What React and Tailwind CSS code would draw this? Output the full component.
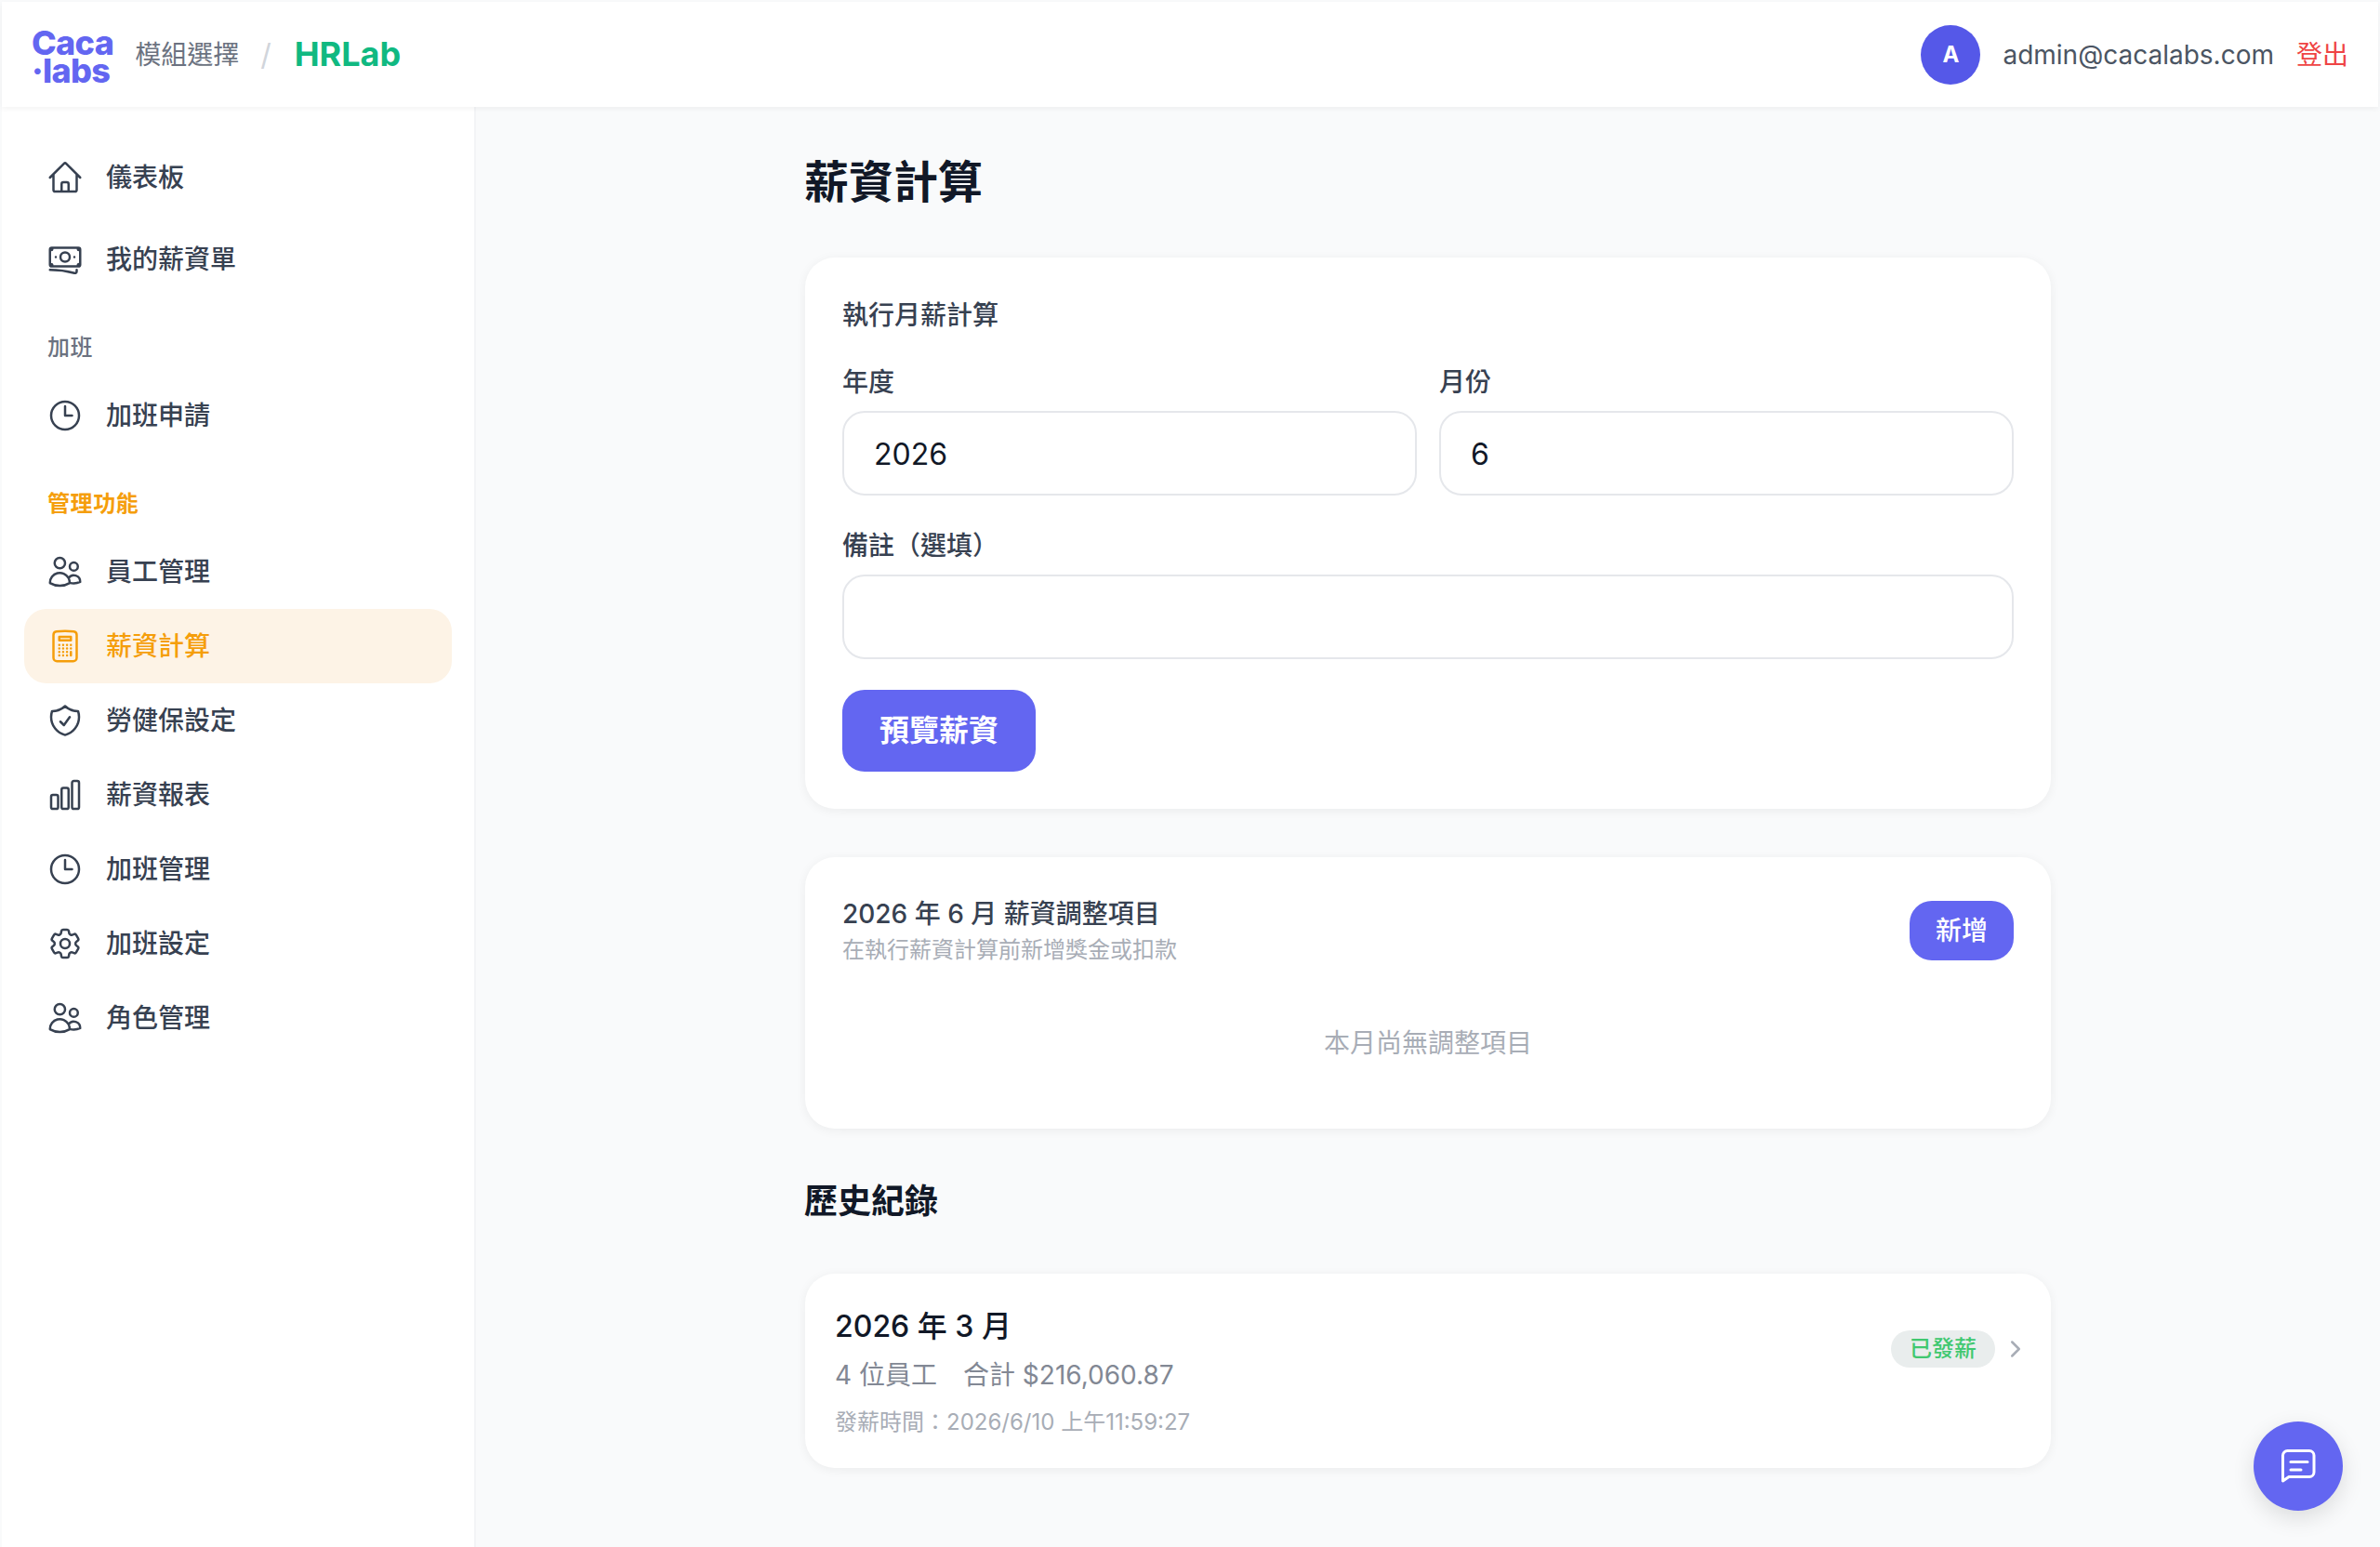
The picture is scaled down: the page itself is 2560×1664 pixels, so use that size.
import {
  HiOutlineBanknotes,
  HiOutlineCalculator,
  HiOutlineChartBar,
  HiOutlineChevronRight,
  HiOutlineClock,
  HiOutlineCog6Tooth,
  HiOutlineHome,
  HiOutlineShieldCheck,
  HiOutlineUsers,
} from 'react-icons/hi2';

const fontStack = { fontFamily: 'Inter, "Noto Sans CJK TC", sans-serif' };

const NavItem = ({ icon: Icon, label, active }) => (
  <a
    className={`flex items-center gap-6 h-20 px-6 rounded-3xl text-[28px] font-medium ${
      active ? 'bg-[#fdf3e6] text-[#f59e0b]' : 'text-[#374151]'
    }`}
  >
    <Icon className="w-10 h-10 shrink-0" />
    <span>{label}</span>
  </a>
);

const Sidebar = () => (
  <aside className="w-[510px] shrink-0 bg-white border-r-2 border-[#f3f4f6] px-6 pt-9">
    <div className="flex flex-col gap-2">
      <NavItem icon={HiOutlineHome} label="儀表板" />
      <NavItem icon={HiOutlineBanknotes} label="我的薪資單" />
    </div>

    <div className="mt-[39px] mb-[17px] px-[25px] text-2xl tracking-[0.6px] font-medium text-[#6b7280]">加班</div>
    <NavItem icon={HiOutlineClock} label="加班申請" />

    <div className="mt-[39px] mb-[17px] px-[25px] text-2xl tracking-[0.6px] font-semibold text-[#f59e0b]">管理功能</div>
    <div className="flex flex-col">
      <NavItem icon={HiOutlineUsers} label="員工管理" />
      <NavItem icon={HiOutlineCalculator} label="薪資計算" active />
      <NavItem icon={HiOutlineShieldCheck} label="勞健保設定" />
      <NavItem icon={HiOutlineChartBar} label="薪資報表" />
      <NavItem icon={HiOutlineClock} label="加班管理" />
      <NavItem icon={HiOutlineCog6Tooth} label="加班設定" />
      <NavItem icon={HiOutlineUsers} label="角色管理" />
    </div>
  </aside>
);

const Field = ({ label, value, className }) => (
  <div className={className}>
    <label className="block mb-[10px] text-[28px] font-medium text-[#374151]">{label}</label>
    <div className="h-[91px] flex items-center px-8 pt-[2px] rounded-3xl border-2 border-[#e5e7eb] bg-white text-[32px] text-[#111827]">
      {value}
    </div>
  </div>
);

const cardClass = 'bg-white rounded-[32px] shadow-[0_2px_12px_rgba(0,0,0,0.06)]';

export default function App() {
  return (
    <div className="relative h-[1664px] overflow-hidden bg-[#f9fafb] pt-[2px] pl-[2px] pr-[2px]" style={fontStack}>
      {/* Header */}
      <header className="h-[113px] flex items-center justify-between bg-white px-8 shadow-[0_2px_6px_rgba(0,0,0,0.05)] relative z-10">
        <div className="flex items-center">
          <div className="text-[36px] leading-[30px] font-extrabold tracking-[-0.7px] text-[#6366f1] mt-[4px]">
            <div>Caca</div>
            <div>·labs</div>
          </div>
          <span className="ml-[23px] text-[28px] text-[#6b7280]">模組選擇</span>
          <span className="ml-[23px] text-[32px] text-[#d1d5db]">/</span>
          <span className="ml-[25px] -mt-[2px] text-[36px] font-bold text-[#10b981]">HRLab</span>
        </div>
        <div className="flex items-center">
          <div className="w-16 h-16 rounded-full bg-[#5558e8] flex items-center justify-center text-white text-2xl font-bold">
            A
          </div>
          <span className="ml-6 text-[28px] text-[#4b5563]">admin@cacalabs.com</span>
          <span className="ml-6 text-[28px] text-[#ef4444]">登出</span>
        </div>
      </header>

      <div className="flex h-[1549px]">
        <Sidebar />

        {/* Main content */}
        <main className="flex-1 pt-[50px]">
          <div className="w-[1340px] ml-[354px]">
            <h1 className="-ml-[1px] -mt-[1px] pb-[1px] text-5xl leading-[64px] font-bold text-[#111827]">薪資計算</h1>

            <section className={`mt-12 p-10 ${cardClass}`}>
              <h2 className="pt-[1px] -mb-[1px] text-[28px] font-medium text-[#374151]">執行月薪計算</h2>
              <div className="mt-[31px] grid grid-cols-2 gap-6">
                <Field label="年度" value="2026" />
                <Field label="月份" value="6" />
              </div>
              <Field className="mt-[33px]" label="備註（選填）" value="" />
              <button className="mt-[33px] w-[208px] h-[88px] rounded-3xl bg-[#6366f1] text-white text-[32px] font-semibold">
                預覽薪資
              </button>
            </section>

            <section className={`mt-[52px] px-10 pt-10 pb-[71px] ${cardClass}`}>
              <div className="flex items-center justify-between">
                <div>
                  <h2 className="text-[28px] font-medium text-[#374151]">2026 年 6 月 薪資調整項目</h2>
                  <p className="text-2xl leading-9 text-[#a8adb6]">在執行薪資計算前新增獎金或扣款</p>
                </div>
                <button className="w-[112px] h-16 rounded-3xl bg-[#6366f1] text-white text-[28px] font-medium">
                  新增
                </button>
              </div>
              <p className="mt-[61px] text-center text-[28px] text-[#a8adb6]">本月尚無調整項目</p>
            </section>

            <h2 className="-ml-[1px] mt-[52px] text-4xl leading-[52px] font-bold text-[#111827]">歷史紀錄</h2>

            <section className={`mt-[52px] px-8 pt-[33px] pb-[31px] flex items-start justify-between ${cardClass}`}>
              <div>
                <div className="text-[32px] leading-[48px] font-medium text-[#111827]">2026 年 3 月</div>
                <div className="mt-[7px] text-[28px] text-[#828894]">4 位員工　合計 $216,060.87</div>
                <div className="mt-3 text-2xl leading-9 text-[#a8adb6]">發薪時間：2026/6/10 上午11:59:27</div>
              </div>
              <div className="mt-[28px] flex items-center gap-[10px] -mr-[6px]">
                <span className="w-[112px] h-10 flex items-center justify-center rounded-full bg-[#e9eded] text-2xl font-medium text-[#40c870]">
                  已發薪
                </span>
                <HiOutlineChevronRight className="w-6 h-6 text-[#a8adb6]" strokeWidth={2.5} />
              </div>
            </section>
          </div>
        </main>
      </div>

      {/* Chat button */}
      <button className="absolute right-10 bottom-[39px] w-24 h-24 rounded-full bg-[#6366f1] flex items-center justify-center shadow-[0_8px_24px_rgba(0,0,0,0.12)]">
        <svg viewBox="0 0 40 40" className="w-10 h-10" fill="none" stroke="white" strokeWidth="3" strokeLinecap="round" strokeLinejoin="round">
          <path d="M3.5 36V8.5a5 5 0 0 1 5-5h23.5a5 5 0 0 1 5 5v18a5 5 0 0 1-5 5H10Z" />
          <path d="M12 15.5h18" />
          <path d="M12 24h11" />
        </svg>
      </button>
    </div>
  );
}
